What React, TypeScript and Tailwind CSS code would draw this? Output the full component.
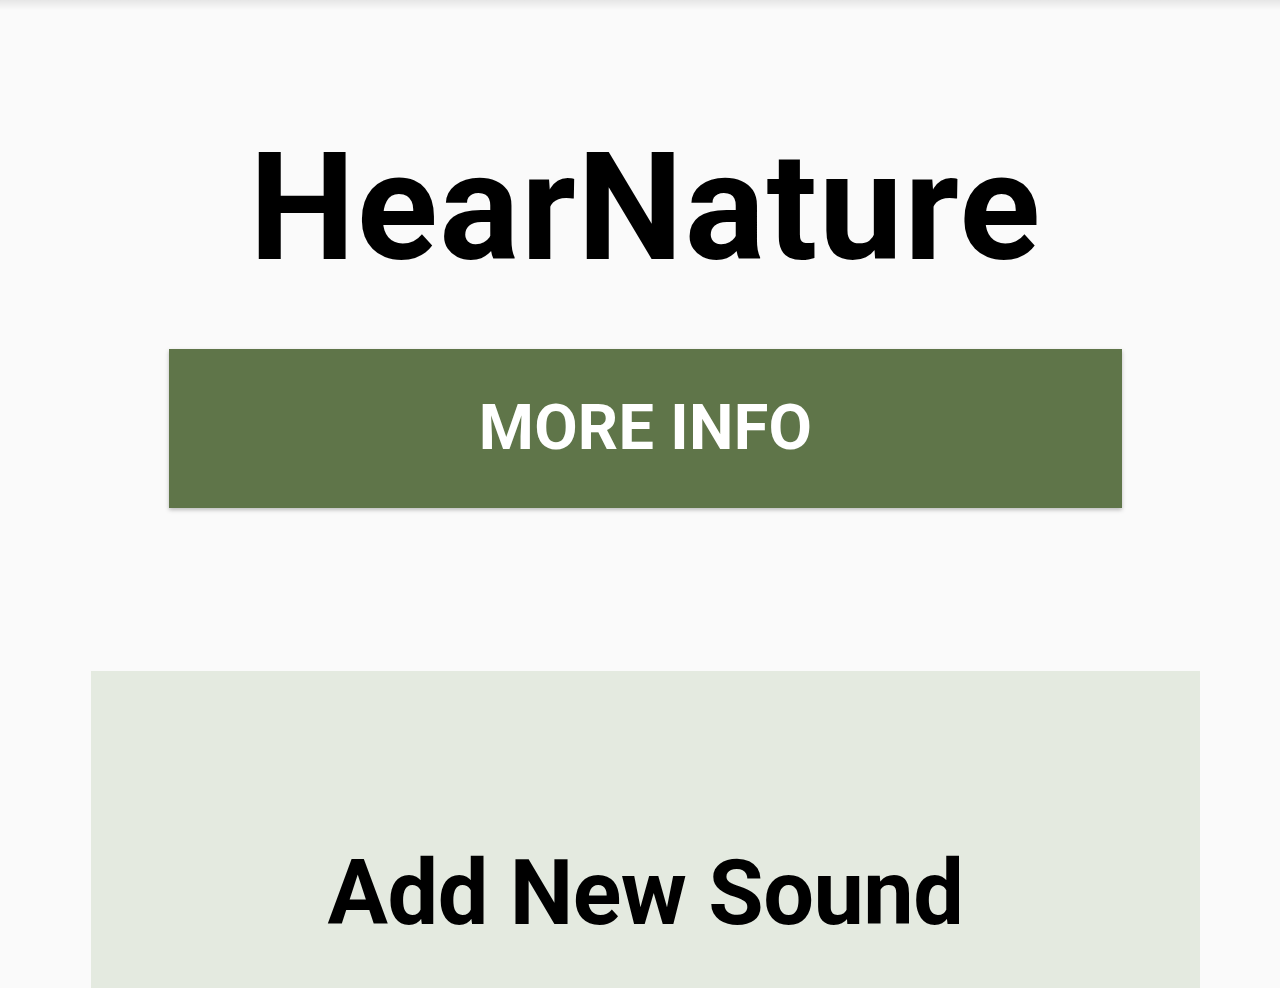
import React from "react";

export default function App() {
  return (
    <div className="w-[1280px] h-[988px] overflow-hidden bg-[#fafafa] font-['Roboto',sans-serif] relative">
      <div className="absolute top-0 left-0 right-0 h-[10px] bg-gradient-to-b from-[#e6e6e6] to-transparent" />
      <div className="flex flex-col items-center pl-[11px]">
        <h1 className="mt-[118px] h-[180px] leading-[180px] text-[150px] font-bold text-black tracking-[1.5px]">
          HearNature
        </h1>
        <button className="mt-[51px] w-[953px] h-[159px] bg-[#5f7549] text-white text-[63px] font-bold uppercase tracking-[0.3px] shadow-[0_2px_4px_rgba(0,0,0,0.25)] flex items-center justify-center">
          More Info
        </button>
      </div>
      <div className="mt-[163px] ml-[91px] w-[1109px] h-[400px] bg-[#e4eae0] flex justify-center">
        <h2 className="mt-[168px] text-[90px] leading-[110px] font-bold text-black h-[110px] tracking-[-0.5px]">
          Add New Sound
        </h2>
      </div>
    </div>
  );
}
